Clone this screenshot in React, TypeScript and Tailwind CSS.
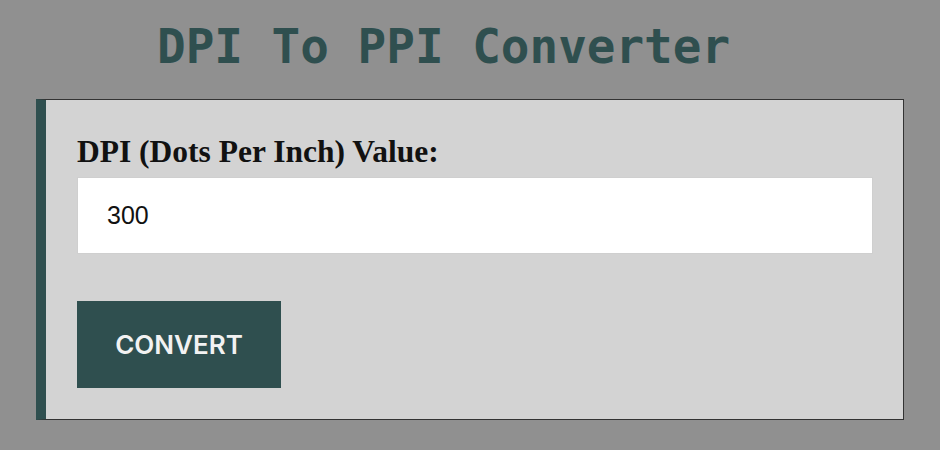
export default function App() {
  return (
    <div className="w-[940px] h-[450px] bg-[#909090] overflow-hidden">
      <h1 className="pl-[157px] pt-[23px] text-[47.6px] leading-[48px] font-bold text-[#2f4f4f] font-['DejaVu_Sans_Mono',monospace]">
        DPI To PPI Converter
      </h1>
      <div className="mx-[36px] mt-[28px] h-[321px] bg-[#d3d3d3] border-l-[10px] border-l-[#2f4f4f] border-y border-r border-[#333] pl-[31px] pr-[30px] pt-[35px] flex flex-col items-start">
        <label className="block text-[31.5px] leading-[34px] font-bold text-[#111] font-['Liberation_Serif',serif]">
          DPI (Dots Per Inch) Value:
        </label>
        <div className="self-stretch mt-[8px] h-[77px] bg-white border border-[#cfcfcf] flex items-center pl-[29px]">
          <span className="text-[25px] text-[#111] font-['Liberation_Sans',Arial,sans-serif]">
            300
          </span>
        </div>
        <button className="mt-[47px] w-[204px] h-[87px] bg-[#2f4f4f] text-[#f2f2f2] text-[26px] font-semibold flex items-center justify-center font-['Inter',sans-serif]">
          CONVERT
        </button>
      </div>
    </div>
  );
}
